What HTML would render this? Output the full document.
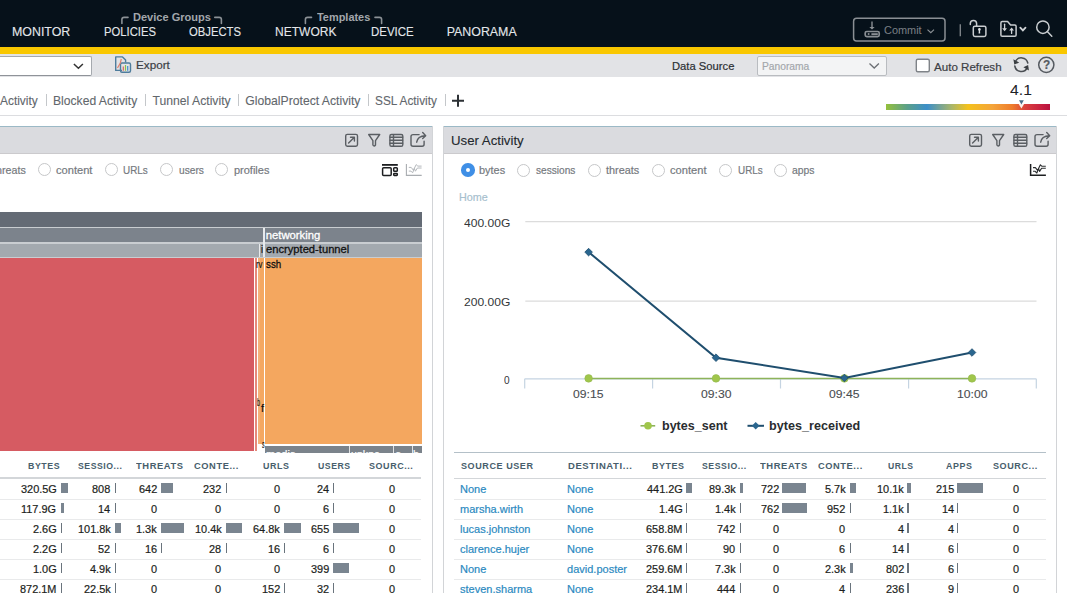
<!DOCTYPE html>
<html><head><meta charset="utf-8"><style>
html,body{margin:0;padding:0;}
body{width:1067px;height:593px;overflow:hidden;position:relative;background:#fff;font-family:"Liberation Sans",sans-serif;}
.t{position:absolute;white-space:nowrap;transform-origin:0 0;-webkit-text-stroke:0.2px currentColor;}
.r{position:absolute;}
</style></head><body>
<div class="r" style="left:0.00px;top:0.00px;width:1067.00px;height:47.00px;background:#06111a;"></div>
<span class="t" style="left:12.00px;top:26.00px;font-size:12.40px;line-height:12.40px;color:#e4e7ea;font-weight:400;-webkit-text-stroke:0.1px currentColor;">MONITOR</span>
<span class="t" style="left:103.70px;top:26.00px;font-size:12.40px;line-height:12.40px;color:#e4e7ea;font-weight:400;transform:scaleX(0.9092);-webkit-text-stroke:0.1px currentColor;">POLICIES</span>
<span class="t" style="left:189.20px;top:26.00px;font-size:12.40px;line-height:12.40px;color:#e4e7ea;font-weight:400;transform:scaleX(0.9092);-webkit-text-stroke:0.1px currentColor;">OBJECTS</span>
<span class="t" style="left:274.70px;top:26.00px;font-size:12.40px;line-height:12.40px;color:#e4e7ea;font-weight:400;transform:scaleX(0.9706);-webkit-text-stroke:0.1px currentColor;">NETWORK</span>
<span class="t" style="left:370.70px;top:26.00px;font-size:12.40px;line-height:12.40px;color:#e4e7ea;font-weight:400;transform:scaleX(0.9251);-webkit-text-stroke:0.1px currentColor;">DEVICE</span>
<span class="t" style="left:446.70px;top:26.00px;font-size:12.40px;line-height:12.40px;color:#e4e7ea;font-weight:400;-webkit-text-stroke:0.1px currentColor;">PANORAMA</span>
<span class="t" style="left:132.80px;top:12.00px;font-size:11.30px;line-height:11.30px;color:#a2a7ac;font-weight:700;transform:scaleX(0.9768);-webkit-text-stroke:0;">Device Groups</span>
<span class="t" style="left:316.70px;top:12.00px;font-size:11.30px;line-height:11.30px;color:#a2a7ac;font-weight:700;transform:scaleX(0.9680);-webkit-text-stroke:0;">Templates</span>
<svg class="r" style="left:0;top:0" width="600" height="46" viewBox="0 0 600 46">
<g fill="none" stroke="#8b9196" stroke-width="1.6" stroke-linecap="round">
<path d="M121.9 23.5 V19.6 Q121.9 17.4 124.1 17.4 H128"/>
<path d="M214.8 17.4 H219.2 Q221.4 17.4 221.4 19.6 V23.5"/>
<path d="M305.4 23.5 V19.6 Q305.4 17.4 307.6 17.4 H311.5"/>
<path d="M375 17.4 H379.4 Q381.6 17.4 381.6 19.6 V23.5"/>
</g></svg>
<svg class="r" style="left:840px;top:0" width="227" height="46" viewBox="840 0 227 46">
<rect x="853.6" y="18.3" width="91.4" height="22.6" rx="3" fill="none" stroke="#8a8f94" stroke-width="1.5"/>
<path d="M872 21.6 V27.6" stroke="#8a8f94" stroke-width="1.4"/>
<path d="M869.3 27 H874.7 L872 29.6 Z" fill="#8a8f94"/>
<rect x="865.2" y="31.5" width="14" height="5.2" rx="1.6" fill="none" stroke="#8a8f94" stroke-width="1.7"/>
<circle cx="868.6" cy="34.1" r="1" fill="#8a8f94"/>
<rect x="871.4" y="33.2" width="6.4" height="1.9" fill="#8a8f94"/>
<path d="M927.5 29.6 L930.8 32.6 L934 29.6" fill="none" stroke="#8a8f94" stroke-width="1.2"/>
<path d="M960.3 24.3 V36.2" stroke="#7d8287" stroke-width="1.4"/>
<g fill="none" stroke="#c9cdd0" stroke-width="1.5">
<path d="M970.3 24.4 V23.6 A3.15 3.15 0 0 1 976.6 23.6 V25.9" stroke-linecap="round"/>
<rect x="973.3" y="26.2" width="12.6" height="10.2" rx="1.6"/>
<path d="M1000.9 35 V22.9 Q1000.9 21.6 1002.2 21.6 H1007.6 L1010.6 24.9 H1014.8 Q1016.1 24.9 1016.1 26.2 V35 Q1016.1 36.3 1014.8 36.3 H1002.2 Q1000.9 36.3 1000.9 35 Z" stroke-linejoin="round"/>
<circle cx="1042.9" cy="27.2" r="6.2"/>
<path d="M1047.3 31.6 L1051.8 36.2" stroke-linecap="round"/>
</g>
<circle cx="979.4" cy="29.4" r="1.3" fill="#dfe2e4"/><path d="M978.8 29.8 H980 L980.2 33.4 H978.6 Z" fill="#dfe2e4"/>
<g fill="none" stroke="#d0d3d6" stroke-width="1.3" stroke-linecap="round">
<path d="M1004.6 24.2 V29.4"/>
<path d="M1011.6 33.4 V29.2"/>
<path d="M1020.3 27.6 L1022.9 30.4 L1025.5 27.6" stroke-width="1.8"/>
</g>
<path d="M1002.2 28.2 L1004.6 31.2 L1007 28.2 Z" fill="#d0d3d6"/>
<path d="M1009.2 30.4 L1011.6 27.4 L1014 30.4 Z" fill="#d0d3d6"/>
</svg>
<span class="t" style="left:884.40px;top:25.00px;font-size:10.80px;line-height:10.80px;color:#7a7f84;font-weight:400;transform:scaleX(1.0106);-webkit-text-stroke:0.05px currentColor;">Commit</span>
<div class="r" style="left:0.00px;top:47.00px;width:1067.00px;height:7.00px;background:#f9c700;"></div>
<div class="r" style="left:0.00px;top:54.00px;width:1067.00px;height:23.00px;background:#e2e3e6;"></div>
<div class="r" style="left:-10px;top:55.5px;width:99.5px;height:18.5px;background:#fff;border:1px solid #a5a9ae;border-bottom-color:#8f9399;border-radius:2px;"></div>
<svg class="r" style="left:0;top:50px" width="1067" height="30" viewBox="0 50 1067 30">
<path d="M73.9 64 L78.4 68.3 L82.9 64" fill="none" stroke="#333" stroke-width="1.5"/>
<g fill="none" stroke="#4e7c9c" stroke-width="1.4" stroke-linejoin="round">
<path d="M122 70.4 H115.7 V56.9 H122.5 L125.6 60 V62.6"/>
<rect x="120.5" y="63" width="10" height="9.3" rx="1.5"/>
</g>
<path d="M117.5 68 L120.3 63 L121.3 59" stroke="#e0826f" stroke-width="1.2" fill="none"/>
<path d="M123.3 70.8 V66.5" stroke="#d9655c" stroke-width="1.2"/>
<path d="M125.5 70.8 V65" stroke="#8cbf4c" stroke-width="1.2"/>
<path d="M127.7 70.8 V66" stroke="#3f8dcc" stroke-width="1.2"/>
<rect x="916.3" y="59.3" width="13" height="12.5" rx="1.5" fill="#fff" stroke="#7f8388" stroke-width="1.4"/>
<g fill="none" stroke="#4a4e53" stroke-width="1.5" stroke-linecap="round">
<path d="M1027.8 63 A6.6 6.6 0 0 0 1015.4 61.6"/>
<path d="M1014.8 66 A6.6 6.6 0 0 0 1027.4 67.4"/>
</g>
<path d="M1013.4 59.2 L1014.3 64.6 L1019.2 62.6 Z" fill="#3a3e42"/>
<path d="M1028.9 70.4 L1028.1 65 L1023.4 67.2 Z" fill="#3a3e42"/>
<circle cx="1046.3" cy="64.8" r="7.6" fill="none" stroke="#555a60" stroke-width="1.5"/>
</svg>
<span class="t" style="left:1042.60px;top:59.00px;font-size:12.00px;line-height:12.00px;color:#555a60;font-weight:700;transform:scaleX(0.9836);">?</span>
<span class="t" style="left:135.70px;top:60.00px;font-size:11.80px;line-height:11.80px;color:#3c4045;font-weight:400;transform:scaleX(0.9911);">Export</span>
<span class="t" style="left:671.70px;top:61.00px;font-size:11.80px;line-height:11.80px;color:#2b2f33;font-weight:400;transform:scaleX(0.9526);">Data Source</span>
<div class="r" style="left:756.5px;top:56px;width:128px;height:17.5px;background:#f3f4f5;border:1px solid #b9bcc0;border-radius:2px;"></div>
<svg class="r" style="left:860px;top:56px" width="25" height="18" viewBox="860 56 25 18"><path d="M869.5 63.5 L874.2 68 L878.9 63.5" fill="none" stroke="#6b6f74" stroke-width="1.3"/></svg>
<span class="t" style="left:761.70px;top:61.00px;font-size:11.50px;line-height:11.50px;color:#a3a7ab;font-weight:400;transform:scaleX(0.8912);">Panorama</span>
<span class="t" style="left:934.10px;top:62.00px;font-size:11.80px;line-height:11.80px;color:#3c4045;font-weight:400;transform:scaleX(0.9814);">Auto Refresh</span>
<div class="r" style="left:0.00px;top:115.00px;width:1067.00px;height:1.00px;background:#dcdde0;"></div>
<span class="t" style="left:0.00px;top:95.00px;font-size:12.20px;line-height:12.20px;color:#62676c;font-weight:400;transform:scaleX(0.9782);-webkit-text-stroke:0.1px currentColor;">Activity</span>
<span class="t" style="left:52.90px;top:95.00px;font-size:12.20px;line-height:12.20px;color:#62676c;font-weight:400;transform:scaleX(0.9946);-webkit-text-stroke:0.1px currentColor;">Blocked Activity</span>
<span class="t" style="left:152.50px;top:95.00px;font-size:12.20px;line-height:12.20px;color:#62676c;font-weight:400;-webkit-text-stroke:0.1px currentColor;">Tunnel Activity</span>
<span class="t" style="left:245.30px;top:95.00px;font-size:12.20px;line-height:12.20px;color:#62676c;font-weight:400;-webkit-text-stroke:0.1px currentColor;">GlobalProtect Activity</span>
<span class="t" style="left:375.00px;top:95.00px;font-size:12.20px;line-height:12.20px;color:#62676c;font-weight:400;transform:scaleX(0.9694);-webkit-text-stroke:0.1px currentColor;">SSL Activity</span>
<div class="r" style="left:45.60px;top:94.40px;width:1.00px;height:12.00px;background:#c4c7ca;"></div>
<div class="r" style="left:145.20px;top:94.40px;width:1.00px;height:12.00px;background:#c4c7ca;"></div>
<div class="r" style="left:237.80px;top:94.40px;width:1.00px;height:12.00px;background:#c4c7ca;"></div>
<div class="r" style="left:367.80px;top:94.40px;width:1.00px;height:12.00px;background:#c4c7ca;"></div>
<div class="r" style="left:445.00px;top:94.40px;width:1.00px;height:12.00px;background:#c4c7ca;"></div>
<svg class="r" style="left:440px;top:90px" width="30" height="22" viewBox="440 90 30 22">
<path d="M452 100.7 H464 M458 94.7 V106.7" stroke="#2d3135" stroke-width="2"/></svg>
<span class="t" style="left:1010.30px;top:83.00px;font-size:14.80px;line-height:14.80px;color:#1e2226;font-weight:400;transform:scaleX(1.0646);-webkit-text-stroke:0;">4.1</span>
<div class="r" style="left:885.7px;top:104.3px;width:164.5px;height:5.4px;background:linear-gradient(90deg,#95c03c 0%,#5aa08a 13%,#3c8fc9 25%,#a9b66a 40%,#f4c21c 50%,#f4a43a 65%,#ee7c2c 77%,#d9413e 85%,#c71f41 95%,#b8123f 100%);"></div>
<svg class="r" style="left:1010px;top:96px" width="24" height="16" viewBox="1010 96 24 16">
<path d="M1018.4 103.6 H1024.4 L1021.4 108.4 Z" fill="#fff" opacity="0.9"/>
<path d="M1019 100.2 H1023.8 L1021.4 104.6 Z" fill="#4a6f8a"/></svg>
<div class="r" style="left:-2.00px;top:126.00px;width:434.00px;height:27.70px;background:#dadbdf;border-top:1px solid #9bb9c6;border-bottom:1px solid #cbcacd;box-sizing:border-box;"></div>
<div class="r" style="left:432.00px;top:126.00px;width:1.00px;height:467.00px;background:#d2d4d7;"></div>
<svg class="r" style="left:339.50px;top:128px" width="95" height="22" viewBox="339.50 128 95 22">
<g transform="translate(-624.40,0)" fill="none" stroke="#5a5e63" stroke-width="1.4" stroke-linecap="round" stroke-linejoin="round">
<rect x="969.6" y="134.4" width="11.8" height="11.8" rx="1.6"/>
<path d="M972.5 143 L978.3 137.2 M974.4 137.2 H978.3 V141.1"/>
<path d="M992.6 134.5 H1003.6 L999.4 140.6 V145 Q998 147 996.8 145 V140.6 Z"/>
<rect x="1013.8" y="134.5" width="12.9" height="11.8" rx="1.6"/>
<path d="M1017.4 134.7 V146 M1014 137.3 H1026.5 M1014 140.3 H1026.5 M1014 143.3 H1026.5"/>
<path d="M1043 134.6 H1037 Q1034.9 134.6 1034.9 136.6 V144.2 Q1034.9 146.2 1037 146.2 H1046 Q1048 146.2 1048 144.2 V141.2"/>
<path d="M1040.6 142.2 Q1041.4 136 1049.4 135.7 M1046.6 132.6 L1049.6 135.7 L1046.6 138.6"/>
</g></svg>
<span class="t" style="left:-4.23px;top:165.00px;font-size:11.50px;line-height:11.50px;color:#75797e;font-weight:400;transform:scaleX(0.9300);">hreats</span>
<div class="r" style="left:37.60px;top:163.40px;width:11px;height:11px;border-radius:50%;border:1.5px solid #c6c7c9;background:#fff;"></div>
<span class="t" style="left:56.00px;top:165.00px;font-size:11.50px;line-height:11.50px;color:#75797e;font-weight:400;transform:scaleX(0.9650);">content</span>
<div class="r" style="left:104.60px;top:163.40px;width:11px;height:11px;border-radius:50%;border:1.5px solid #c6c7c9;background:#fff;"></div>
<span class="t" style="left:123.30px;top:165.00px;font-size:11.50px;line-height:11.50px;color:#75797e;font-weight:400;transform:scaleX(0.8591);">URLs</span>
<div class="r" style="left:159.90px;top:163.40px;width:11px;height:11px;border-radius:50%;border:1.5px solid #c6c7c9;background:#fff;"></div>
<span class="t" style="left:178.50px;top:165.00px;font-size:11.50px;line-height:11.50px;color:#75797e;font-weight:400;transform:scaleX(0.8856);">users</span>
<div class="r" style="left:215.00px;top:163.40px;width:11px;height:11px;border-radius:50%;border:1.5px solid #c6c7c9;background:#fff;"></div>
<span class="t" style="left:233.60px;top:165.00px;font-size:11.50px;line-height:11.50px;color:#75797e;font-weight:400;transform:scaleX(0.9545);">profiles</span>
<svg class="r" style="left:378px;top:158px" width="48" height="24" viewBox="378 158 48 24">
<g fill="none" stroke="#1d1f21" stroke-width="1.5">
<path d="M382 164.9 H397.8" stroke-width="1.8"/>
<rect x="382.6" y="167.8" width="8.6" height="7.6" rx="1"/>
<rect x="393.7" y="167.8" width="3.6" height="3.4" rx="0.8"/>
<rect x="393.7" y="173.6" width="3.6" height="1.8" rx="0.6"/>
</g>
<path d="M406.4 163.9 V175.4 H421.7" fill="none" stroke="#a9adb1" stroke-width="1.1"/>
<g fill="none" stroke="#b4b8bc" stroke-width="1" stroke-linejoin="round">
<path d="M408.8 167.4 H411.2 L413.4 170.2 L416.2 164.6 L417.8 166.1 H421.6"/>
<path d="M408.8 171.1 H411 L412.6 172.8 L414.4 168.4 L415.4 171.2 L417.4 168 H421.6"/>
</g></svg>
<div class="r" style="left:-2.00px;top:226.70px;width:424.00px;height:31.30px;background:#c9cdd1;"></div>
<div class="r" style="left:-2.00px;top:212.30px;width:424.00px;height:14.40px;background:#646b75;"></div>
<div class="r" style="left:-2.00px;top:228.30px;width:424.00px;height:13.50px;background:#7c838c;"></div>
<div class="r" style="left:-2.00px;top:243.50px;width:424.00px;height:13.20px;background:#a3a9af;"></div>
<div class="r" style="left:263.30px;top:228.30px;width:1.50px;height:28.40px;background:#e8eaec;"></div>
<div class="r" style="left:258.80px;top:243.50px;width:1.20px;height:13.20px;background:#e8eaec;"></div>
<div class="r" style="left:-2.00px;top:258.00px;width:256.30px;height:193.00px;background:#d65b62;"></div>
<div class="r" style="left:255.40px;top:258.00px;width:1.60px;height:193.00px;background:#e58a7c;"></div>
<div class="r" style="left:257.60px;top:258.00px;width:2.00px;height:185.70px;background:#f2b27a;"></div>
<div class="r" style="left:260.30px;top:258.00px;width:3.40px;height:185.70px;background:#f4a862;"></div>
<div class="r" style="left:264.60px;top:258.00px;width:157.20px;height:185.70px;background:#f4a75f;"></div>
<div class="r" style="left:264.60px;top:445.50px;width:157.00px;height:7.20px;background:#7b838b;"></div>
<div class="r" style="left:348.70px;top:445.50px;width:1.00px;height:7.20px;background:#e0e2e4;"></div>
<div class="r" style="left:392.80px;top:445.50px;width:1.00px;height:7.20px;background:#e0e2e4;"></div>
<div class="r" style="left:411.50px;top:445.50px;width:1.00px;height:7.20px;background:#e0e2e4;"></div>
<div class="r" style="left:264.6px;top:445.5px;width:157px;height:7.2px;overflow:hidden;"><span class="t" style="left:1.80px;top:3.00px;font-size:11.30px;line-height:11.30px;color:#ffffff;font-weight:400;transform:scaleX(0.9743);">media</span><span class="t" style="left:86.00px;top:3.00px;font-size:11.30px;line-height:11.30px;color:#ffffff;font-weight:400;transform:scaleX(0.9418);">unkno</span><span class="t" style="left:130.00px;top:3.00px;font-size:11.30px;line-height:11.30px;color:#ffffff;font-weight:400;transform:scaleX(1.0619);">c</span><span class="t" style="left:148.60px;top:3.00px;font-size:11.30px;line-height:11.30px;color:#ffffff;font-weight:400;transform:scaleX(0.9567);">b</span></div>
<span class="t" style="left:261.50px;top:439.00px;font-size:11.30px;line-height:11.30px;color:#111;font-weight:400;transform:scaleX(0.4425);">s</span>
<span class="t" style="left:265.70px;top:230.00px;font-size:11.30px;line-height:11.30px;color:#fff;font-weight:400;-webkit-text-stroke:0.3px currentColor;">networking</span>
<span class="t" style="left:260.80px;top:244.00px;font-size:11.30px;line-height:11.30px;color:#111;font-weight:400;transform:scaleX(0.7955);">i</span>
<span class="t" style="left:265.70px;top:244.00px;font-size:11.30px;line-height:11.30px;color:#111;font-weight:400;transform:scaleX(0.9895);-webkit-text-stroke:0.3px currentColor;">encrypted-tunnel</span>
<span class="t" style="left:256.20px;top:259.00px;font-size:11.30px;line-height:11.30px;color:#111;font-weight:400;transform:scaleX(0.6910);">rv</span>
<span class="t" style="left:265.70px;top:259.00px;font-size:11.30px;line-height:11.30px;color:#111;font-weight:400;transform:scaleX(0.8650);-webkit-text-stroke:0.3px currentColor;">ssh</span>
<span class="t" style="left:256.80px;top:397.00px;font-size:11.30px;line-height:11.30px;color:#111;font-weight:400;transform:scaleX(0.4784);">b</span>
<span class="t" style="left:261.00px;top:403.00px;font-size:11.30px;line-height:11.30px;color:#111;font-weight:400;transform:scaleX(0.9482);">f</span>
<span class="t" style="left:27.80px;top:461.00px;font-size:9.70px;line-height:9.70px;color:#475e6c;font-weight:700;transform:scaleX(0.9094);letter-spacing:0.6px;-webkit-text-stroke:0;">BYTES</span>
<span class="t" style="left:78.00px;top:461.00px;font-size:9.70px;line-height:9.70px;color:#475e6c;font-weight:700;transform:scaleX(0.8978);letter-spacing:0.6px;-webkit-text-stroke:0;">SESSIO...</span>
<span class="t" style="left:136.00px;top:461.00px;font-size:9.70px;line-height:9.70px;color:#475e6c;font-weight:700;transform:scaleX(0.9655);letter-spacing:0.6px;-webkit-text-stroke:0;">THREATS</span>
<span class="t" style="left:194.10px;top:461.00px;font-size:9.70px;line-height:9.70px;color:#475e6c;font-weight:700;transform:scaleX(0.9605);letter-spacing:0.6px;-webkit-text-stroke:0;">CONTE...</span>
<span class="t" style="left:263.30px;top:461.00px;font-size:9.70px;line-height:9.70px;color:#475e6c;font-weight:700;transform:scaleX(0.9182);letter-spacing:0.6px;-webkit-text-stroke:0;">URLS</span>
<span class="t" style="left:318.40px;top:461.00px;font-size:9.70px;line-height:9.70px;color:#475e6c;font-weight:700;transform:scaleX(0.8990);letter-spacing:0.6px;-webkit-text-stroke:0;">USERS</span>
<span class="t" style="left:368.80px;top:461.00px;font-size:9.70px;line-height:9.70px;color:#475e6c;font-weight:700;transform:scaleX(0.9278);letter-spacing:0.6px;-webkit-text-stroke:0;">SOURC...</span>
<div class="r" style="left:-2.00px;top:477.30px;width:423.20px;height:1.60px;background:#d3d6d9;"></div>
<span class="t" style="left:20.64px;top:484.00px;font-size:11.10px;line-height:11.10px;color:#1c1e20;font-weight:400;transform:scaleX(0.9850);">320.5G</span>
<div class="r" style="left:61.00px;top:483.30px;width:6.80px;height:10.00px;background:#7a8590;"></div>
<span class="t" style="left:92.27px;top:484.00px;font-size:11.10px;line-height:11.10px;color:#1c1e20;font-weight:400;transform:scaleX(0.9850);">808</span>
<div class="r" style="left:114.90px;top:483.40px;width:1.30px;height:9.90px;background:#6a747d;"></div>
<span class="t" style="left:138.77px;top:484.00px;font-size:11.10px;line-height:11.10px;color:#1c1e20;font-weight:400;transform:scaleX(0.9850);">642</span>
<div class="r" style="left:161.20px;top:483.30px;width:12.00px;height:10.00px;background:#7a8590;"></div>
<span class="t" style="left:203.27px;top:484.00px;font-size:11.10px;line-height:11.10px;color:#1c1e20;font-weight:400;transform:scaleX(0.9850);">232</span>
<div class="r" style="left:225.60px;top:483.40px;width:1.30px;height:9.90px;background:#6a747d;"></div>
<span class="t" style="left:273.93px;top:484.00px;font-size:11.10px;line-height:11.10px;color:#1c1e20;font-weight:400;transform:scaleX(0.9850);">0</span>
<span class="t" style="left:316.84px;top:484.00px;font-size:11.10px;line-height:11.10px;color:#1c1e20;font-weight:400;transform:scaleX(0.9850);">24</span>
<div class="r" style="left:333.00px;top:483.40px;width:1.30px;height:9.90px;background:#6a747d;"></div>
<span class="t" style="left:388.93px;top:484.00px;font-size:11.10px;line-height:11.10px;color:#1c1e20;font-weight:400;transform:scaleX(0.9850);">0</span>
<span class="t" style="left:21.46px;top:504.00px;font-size:11.10px;line-height:11.10px;color:#1c1e20;font-weight:400;transform:scaleX(0.9850);">117.9G</span>
<div class="r" style="left:61.00px;top:503.30px;width:2.70px;height:10.00px;background:#7a8590;"></div>
<span class="t" style="left:98.34px;top:504.00px;font-size:11.10px;line-height:11.10px;color:#1c1e20;font-weight:400;transform:scaleX(0.9850);">14</span>
<div class="r" style="left:114.90px;top:503.40px;width:1.30px;height:9.90px;background:#6a747d;"></div>
<span class="t" style="left:150.93px;top:504.00px;font-size:11.10px;line-height:11.10px;color:#1c1e20;font-weight:400;transform:scaleX(0.9850);">0</span>
<span class="t" style="left:215.43px;top:504.00px;font-size:11.10px;line-height:11.10px;color:#1c1e20;font-weight:400;transform:scaleX(0.9850);">0</span>
<span class="t" style="left:273.93px;top:504.00px;font-size:11.10px;line-height:11.10px;color:#1c1e20;font-weight:400;transform:scaleX(0.9850);">0</span>
<span class="t" style="left:322.93px;top:504.00px;font-size:11.10px;line-height:11.10px;color:#1c1e20;font-weight:400;transform:scaleX(0.9850);">6</span>
<div class="r" style="left:333.00px;top:503.40px;width:1.30px;height:9.90px;background:#6a747d;"></div>
<span class="t" style="left:388.93px;top:504.00px;font-size:11.10px;line-height:11.10px;color:#1c1e20;font-weight:400;transform:scaleX(0.9850);">0</span>
<span class="t" style="left:32.80px;top:524.00px;font-size:11.10px;line-height:11.10px;color:#1c1e20;font-weight:400;transform:scaleX(0.9850);">2.6G</span>
<div class="r" style="left:61.00px;top:523.40px;width:1.30px;height:9.90px;background:#6a747d;"></div>
<span class="t" style="left:77.64px;top:524.00px;font-size:11.10px;line-height:11.10px;color:#1c1e20;font-weight:400;transform:scaleX(0.9850);">101.8k</span>
<div class="r" style="left:114.90px;top:523.30px;width:6.00px;height:10.00px;background:#7a8590;"></div>
<span class="t" style="left:136.31px;top:524.00px;font-size:11.10px;line-height:11.10px;color:#1c1e20;font-weight:400;transform:scaleX(0.9850);">1.3k</span>
<div class="r" style="left:161.20px;top:523.30px;width:23.00px;height:10.00px;background:#7a8590;"></div>
<span class="t" style="left:194.71px;top:524.00px;font-size:11.10px;line-height:11.10px;color:#1c1e20;font-weight:400;transform:scaleX(0.9850);">10.4k</span>
<div class="r" style="left:225.60px;top:523.30px;width:16.50px;height:10.00px;background:#7a8590;"></div>
<span class="t" style="left:253.21px;top:524.00px;font-size:11.10px;line-height:11.10px;color:#1c1e20;font-weight:400;transform:scaleX(0.9850);">64.8k</span>
<div class="r" style="left:283.60px;top:523.30px;width:17.00px;height:10.00px;background:#7a8590;"></div>
<span class="t" style="left:310.77px;top:524.00px;font-size:11.10px;line-height:11.10px;color:#1c1e20;font-weight:400;transform:scaleX(0.9850);">655</span>
<div class="r" style="left:333.00px;top:523.30px;width:25.60px;height:10.00px;background:#7a8590;"></div>
<span class="t" style="left:388.93px;top:524.00px;font-size:11.10px;line-height:11.10px;color:#1c1e20;font-weight:400;transform:scaleX(0.9850);">0</span>
<span class="t" style="left:32.80px;top:544.00px;font-size:11.10px;line-height:11.10px;color:#1c1e20;font-weight:400;transform:scaleX(0.9850);">2.2G</span>
<div class="r" style="left:61.00px;top:543.40px;width:1.30px;height:9.90px;background:#6a747d;"></div>
<span class="t" style="left:98.34px;top:544.00px;font-size:11.10px;line-height:11.10px;color:#1c1e20;font-weight:400;transform:scaleX(0.9850);">52</span>
<div class="r" style="left:114.90px;top:543.40px;width:1.30px;height:9.90px;background:#6a747d;"></div>
<span class="t" style="left:144.84px;top:544.00px;font-size:11.10px;line-height:11.10px;color:#1c1e20;font-weight:400;transform:scaleX(0.9850);">16</span>
<div class="r" style="left:161.20px;top:543.40px;width:1.30px;height:9.90px;background:#6a747d;"></div>
<span class="t" style="left:209.34px;top:544.00px;font-size:11.10px;line-height:11.10px;color:#1c1e20;font-weight:400;transform:scaleX(0.9850);">28</span>
<div class="r" style="left:225.60px;top:543.40px;width:1.30px;height:9.90px;background:#6a747d;"></div>
<span class="t" style="left:267.84px;top:544.00px;font-size:11.10px;line-height:11.10px;color:#1c1e20;font-weight:400;transform:scaleX(0.9850);">16</span>
<div class="r" style="left:283.60px;top:543.40px;width:1.30px;height:9.90px;background:#6a747d;"></div>
<span class="t" style="left:322.93px;top:544.00px;font-size:11.10px;line-height:11.10px;color:#1c1e20;font-weight:400;transform:scaleX(0.9850);">6</span>
<div class="r" style="left:333.00px;top:543.40px;width:1.30px;height:9.90px;background:#6a747d;"></div>
<span class="t" style="left:388.93px;top:544.00px;font-size:11.10px;line-height:11.10px;color:#1c1e20;font-weight:400;transform:scaleX(0.9850);">0</span>
<span class="t" style="left:32.80px;top:564.00px;font-size:11.10px;line-height:11.10px;color:#1c1e20;font-weight:400;transform:scaleX(0.9850);">1.0G</span>
<div class="r" style="left:61.00px;top:563.40px;width:1.30px;height:9.90px;background:#6a747d;"></div>
<span class="t" style="left:89.81px;top:564.00px;font-size:11.10px;line-height:11.10px;color:#1c1e20;font-weight:400;transform:scaleX(0.9850);">4.9k</span>
<div class="r" style="left:114.90px;top:563.40px;width:1.30px;height:9.90px;background:#6a747d;"></div>
<span class="t" style="left:150.93px;top:564.00px;font-size:11.10px;line-height:11.10px;color:#1c1e20;font-weight:400;transform:scaleX(0.9850);">0</span>
<span class="t" style="left:215.43px;top:564.00px;font-size:11.10px;line-height:11.10px;color:#1c1e20;font-weight:400;transform:scaleX(0.9850);">0</span>
<span class="t" style="left:273.93px;top:564.00px;font-size:11.10px;line-height:11.10px;color:#1c1e20;font-weight:400;transform:scaleX(0.9850);">0</span>
<span class="t" style="left:310.77px;top:564.00px;font-size:11.10px;line-height:11.10px;color:#1c1e20;font-weight:400;transform:scaleX(0.9850);">399</span>
<div class="r" style="left:333.00px;top:563.30px;width:15.60px;height:10.00px;background:#7a8590;"></div>
<span class="t" style="left:388.93px;top:564.00px;font-size:11.10px;line-height:11.10px;color:#1c1e20;font-weight:400;transform:scaleX(0.9850);">0</span>
<span class="t" style="left:20.04px;top:584.00px;font-size:11.10px;line-height:11.10px;color:#1c1e20;font-weight:400;transform:scaleX(0.9850);">872.1M</span>
<div class="r" style="left:61.00px;top:583.40px;width:1.30px;height:9.90px;background:#6a747d;"></div>
<span class="t" style="left:83.71px;top:584.00px;font-size:11.10px;line-height:11.10px;color:#1c1e20;font-weight:400;transform:scaleX(0.9850);">22.5k</span>
<div class="r" style="left:114.90px;top:583.40px;width:1.30px;height:9.90px;background:#6a747d;"></div>
<span class="t" style="left:150.93px;top:584.00px;font-size:11.10px;line-height:11.10px;color:#1c1e20;font-weight:400;transform:scaleX(0.9850);">0</span>
<span class="t" style="left:215.43px;top:584.00px;font-size:11.10px;line-height:11.10px;color:#1c1e20;font-weight:400;transform:scaleX(0.9850);">0</span>
<span class="t" style="left:261.77px;top:584.00px;font-size:11.10px;line-height:11.10px;color:#1c1e20;font-weight:400;transform:scaleX(0.9850);">152</span>
<div class="r" style="left:283.60px;top:583.40px;width:1.30px;height:9.90px;background:#6a747d;"></div>
<span class="t" style="left:316.84px;top:584.00px;font-size:11.10px;line-height:11.10px;color:#1c1e20;font-weight:400;transform:scaleX(0.9850);">32</span>
<div class="r" style="left:333.00px;top:583.40px;width:1.30px;height:9.90px;background:#6a747d;"></div>
<span class="t" style="left:388.93px;top:584.00px;font-size:11.10px;line-height:11.10px;color:#1c1e20;font-weight:400;transform:scaleX(0.9850);">0</span>
<div class="r" style="left:-2.00px;top:498.50px;width:423.20px;height:1.00px;background:#e9eaeb;"></div>
<div class="r" style="left:-2.00px;top:518.50px;width:423.20px;height:1.00px;background:#e9eaeb;"></div>
<div class="r" style="left:-2.00px;top:538.50px;width:423.20px;height:1.00px;background:#e9eaeb;"></div>
<div class="r" style="left:-2.00px;top:558.50px;width:423.20px;height:1.00px;background:#e9eaeb;"></div>
<div class="r" style="left:-2.00px;top:578.50px;width:423.20px;height:1.00px;background:#e9eaeb;"></div>
<div class="r" style="left:-2.00px;top:598.50px;width:423.20px;height:1.00px;background:#e9eaeb;"></div>
<div class="r" style="left:443.20px;top:126.00px;width:1.00px;height:467.00px;background:#d2d4d7;"></div>
<div class="r" style="left:1056.00px;top:126.00px;width:1.00px;height:467.00px;background:#d2d4d7;"></div>
<div class="r" style="left:444.20px;top:126.00px;width:611.80px;height:27.70px;background:#dadbdf;border-top:1px solid #9bb9c6;border-bottom:1px solid #cbcacd;box-sizing:border-box;"></div>
<span class="t" style="left:450.50px;top:134.00px;font-size:13.30px;line-height:13.30px;color:#22282d;font-weight:400;transform:scaleX(0.9938);-webkit-text-stroke:0.1px currentColor;">User Activity</span>
<svg class="r" style="left:963.90px;top:128px" width="95" height="22" viewBox="963.90 128 95 22">
<g transform="translate(0.00,0)" fill="none" stroke="#5a5e63" stroke-width="1.4" stroke-linecap="round" stroke-linejoin="round">
<rect x="969.6" y="134.4" width="11.8" height="11.8" rx="1.6"/>
<path d="M972.5 143 L978.3 137.2 M974.4 137.2 H978.3 V141.1"/>
<path d="M992.6 134.5 H1003.6 L999.4 140.6 V145 Q998 147 996.8 145 V140.6 Z"/>
<rect x="1013.8" y="134.5" width="12.9" height="11.8" rx="1.6"/>
<path d="M1017.4 134.7 V146 M1014 137.3 H1026.5 M1014 140.3 H1026.5 M1014 143.3 H1026.5"/>
<path d="M1043 134.6 H1037 Q1034.9 134.6 1034.9 136.6 V144.2 Q1034.9 146.2 1037 146.2 H1046 Q1048 146.2 1048 144.2 V141.2"/>
<path d="M1040.6 142.2 Q1041.4 136 1049.4 135.7 M1046.6 132.6 L1049.6 135.7 L1046.6 138.6"/>
</g></svg>
<div class="r" style="left:461.30px;top:163.10px;width:13.6px;height:13.6px;border-radius:50%;background:#3f8fe6;"></div><div class="r" style="left:466.00px;top:167.80px;width:4.2px;height:4.2px;border-radius:50%;background:#fff;"></div>
<div class="r" style="left:517.20px;top:163.90px;width:11px;height:11px;border-radius:50%;border:1.5px solid #c6c7c9;background:#fff;"></div>
<span class="t" style="left:536.00px;top:165.00px;font-size:11.50px;line-height:11.50px;color:#75797e;font-weight:400;transform:scaleX(0.8785);">sessions</span>
<div class="r" style="left:587.50px;top:163.90px;width:11px;height:11px;border-radius:50%;border:1.5px solid #c6c7c9;background:#fff;"></div>
<span class="t" style="left:605.80px;top:165.00px;font-size:11.50px;line-height:11.50px;color:#75797e;font-weight:400;transform:scaleX(0.9442);">threats</span>
<div class="r" style="left:651.50px;top:163.90px;width:11px;height:11px;border-radius:50%;border:1.5px solid #c6c7c9;background:#fff;"></div>
<span class="t" style="left:670.00px;top:165.00px;font-size:11.50px;line-height:11.50px;color:#75797e;font-weight:400;transform:scaleX(0.9677);">content</span>
<div class="r" style="left:719.00px;top:163.90px;width:11px;height:11px;border-radius:50%;border:1.5px solid #c6c7c9;background:#fff;"></div>
<span class="t" style="left:737.50px;top:165.00px;font-size:11.50px;line-height:11.50px;color:#75797e;font-weight:400;transform:scaleX(0.8591);">URLs</span>
<div class="r" style="left:774.30px;top:163.90px;width:11px;height:11px;border-radius:50%;border:1.5px solid #c6c7c9;background:#fff;"></div>
<span class="t" style="left:792.20px;top:165.00px;font-size:11.50px;line-height:11.50px;color:#75797e;font-weight:400;transform:scaleX(0.9027);">apps</span>
<span class="t" style="left:479.30px;top:165.00px;font-size:11.50px;line-height:11.50px;color:#75797e;font-weight:400;transform:scaleX(0.9496);">bytes</span>
<svg class="r" style="left:1026px;top:160px" width="24" height="20" viewBox="1026 160 24 20">
<path d="M1030.6 164.1 V175.2 H1045.9" fill="none" stroke="#1d1f21" stroke-width="1.5"/>
<g fill="none" stroke="#2a2c2e" stroke-width="1.1" stroke-linejoin="round">
<path d="M1033 167.6 H1035.4 L1037.6 170.4 L1040.4 164.8 L1042 166.3 H1045.8"/>
<path d="M1033 171.3 H1035.2 L1036.8 173 L1038.6 168.6 L1039.6 171.4 L1041.6 168.2 H1045.8"/>
</g></svg>
<span class="t" style="left:458.50px;top:192.00px;font-size:11.30px;line-height:11.30px;color:#a7c0ce;font-weight:400;transform:scaleX(0.9521);">Home</span>
<span class="t" style="left:464.00px;top:218.00px;font-size:11.30px;line-height:11.30px;color:#333639;font-weight:400;transform:scaleX(1.0677);-webkit-text-stroke:0;">400.00G</span>
<span class="t" style="left:464.00px;top:297.00px;font-size:11.30px;line-height:11.30px;color:#333639;font-weight:400;transform:scaleX(1.0677);-webkit-text-stroke:0;">200.00G</span>
<span class="t" style="left:504.20px;top:375.00px;font-size:11.30px;line-height:11.30px;color:#333639;font-weight:400;transform:scaleX(0.8929);-webkit-text-stroke:0;">0</span>
<span class="t" style="left:573.35px;top:389.00px;font-size:11.30px;line-height:11.30px;color:#4a4d50;font-weight:400;transform:scaleX(1.0786);-webkit-text-stroke:0.1px currentColor;">09:15</span>
<span class="t" style="left:700.75px;top:389.00px;font-size:11.30px;line-height:11.30px;color:#4a4d50;font-weight:400;transform:scaleX(1.0786);-webkit-text-stroke:0.1px currentColor;">09:30</span>
<span class="t" style="left:829.15px;top:389.00px;font-size:11.30px;line-height:11.30px;color:#4a4d50;font-weight:400;transform:scaleX(1.0786);-webkit-text-stroke:0.1px currentColor;">09:45</span>
<span class="t" style="left:956.75px;top:389.00px;font-size:11.30px;line-height:11.30px;color:#4a4d50;font-weight:400;transform:scaleX(1.0786);-webkit-text-stroke:0.1px currentColor;">10:00</span>
<svg class="r" style="left:450px;top:200px" width="600" height="245" viewBox="450 200 600 245">
<path d="M525.3 221.6 H1036.5 M525.3 301.2 H1036.5" stroke="#dcdcdc" stroke-width="1.2"/>
<path d="M524.7 378.8 H1036.3 M524.7 378.8 V388.5 M652.6 378.8 V388.5 M780.5 378.8 V388.5 M908.6 378.8 V388.5 M1036.3 378.8 V388.5" stroke="#c5d4e2" stroke-width="1.2" fill="none"/>
<path d="M588.6 378.5 H972" stroke="#8db35a" stroke-width="1.5"/>
<g fill="#a0c64b" stroke="#93b950" stroke-width="0.6"><circle cx="588.6" cy="378.4" r="3.8"/><circle cx="716" cy="378.4" r="3.8"/><circle cx="844.4" cy="378.4" r="3.8"/><circle cx="972" cy="378.4" r="3.8"/></g>
<path d="M588.6 252.1 L716 357.7 L844.4 378 L972 352.5" stroke="#1f4e6e" stroke-width="2" fill="none"/>
<g fill="#2a668f" stroke="#1f4e6e" stroke-width="0.8">
<path d="M588.6 248.3 L592.4 252.1 L588.6 255.9 L584.8 252.1 Z"/>
<path d="M716 353.9 L719.8 357.7 L716 361.5 L712.2 357.7 Z"/>
<path d="M844.4 374.2 L848.2 378 L844.4 381.8 L840.6 378 Z"/>
<path d="M972 348.7 L975.8 352.5 L972 356.3 L968.2 352.5 Z"/>
</g>
<path d="M640.5 425.8 H655.2" stroke="#8db35a" stroke-width="1.6"/><circle cx="648" cy="425.8" r="3.8" fill="#a0c64b"/>
<path d="M747.5 425.8 H764" stroke="#1f4e6e" stroke-width="2"/><path d="M755.7 422 L759.5 425.8 L755.7 429.6 L751.9 425.8 Z" fill="#2a668f"/>
</svg>
<span class="t" style="left:661.60px;top:420.00px;font-size:12.60px;line-height:12.60px;color:#2a2d30;font-weight:700;transform:scaleX(0.9949);-webkit-text-stroke:0;">bytes_sent</span>
<span class="t" style="left:769.10px;top:420.00px;font-size:12.60px;line-height:12.60px;color:#2a2d30;font-weight:700;-webkit-text-stroke:0;">bytes_received</span>
<div class="r" style="left:454.40px;top:451.80px;width:592.00px;height:1.40px;background:#b4c0c8;"></div>
<span class="t" style="left:460.70px;top:461.00px;font-size:9.70px;line-height:9.70px;color:#475e6c;font-weight:700;transform:scaleX(0.9345);letter-spacing:0.6px;-webkit-text-stroke:0;">SOURCE USER</span>
<span class="t" style="left:567.70px;top:461.00px;font-size:9.70px;line-height:9.70px;color:#475e6c;font-weight:700;transform:scaleX(0.9806);letter-spacing:0.6px;-webkit-text-stroke:0;">DESTINATI...</span>
<span class="t" style="left:651.90px;top:461.00px;font-size:9.70px;line-height:9.70px;color:#475e6c;font-weight:700;transform:scaleX(0.9209);letter-spacing:0.6px;-webkit-text-stroke:0;">BYTES</span>
<span class="t" style="left:702.20px;top:461.00px;font-size:9.70px;line-height:9.70px;color:#475e6c;font-weight:700;transform:scaleX(0.8999);letter-spacing:0.6px;-webkit-text-stroke:0;">SESSIO...</span>
<span class="t" style="left:760.40px;top:461.00px;font-size:9.70px;line-height:9.70px;color:#475e6c;font-weight:700;transform:scaleX(0.9696);letter-spacing:0.6px;-webkit-text-stroke:0;">THREATS</span>
<span class="t" style="left:818.20px;top:461.00px;font-size:9.70px;line-height:9.70px;color:#475e6c;font-weight:700;transform:scaleX(0.9584);letter-spacing:0.6px;-webkit-text-stroke:0;">CONTE...</span>
<span class="t" style="left:888.20px;top:461.00px;font-size:9.70px;line-height:9.70px;color:#475e6c;font-weight:700;transform:scaleX(0.8898);letter-spacing:0.6px;-webkit-text-stroke:0;">URLS</span>
<span class="t" style="left:945.80px;top:461.00px;font-size:9.70px;line-height:9.70px;color:#475e6c;font-weight:700;transform:scaleX(0.9182);letter-spacing:0.6px;-webkit-text-stroke:0;">APPS</span>
<span class="t" style="left:993.00px;top:461.00px;font-size:9.70px;line-height:9.70px;color:#475e6c;font-weight:700;transform:scaleX(0.9362);letter-spacing:0.6px;-webkit-text-stroke:0;">SOURC...</span>
<div class="r" style="left:454.40px;top:477.60px;width:592.00px;height:1.60px;background:#d3d6d9;"></div>
<span class="t" style="left:460.20px;top:484.00px;font-size:11.30px;line-height:11.30px;color:#2b8ac1;font-weight:400;transform:scaleX(0.9750);">None</span>
<span class="t" style="left:567.20px;top:484.00px;font-size:11.30px;line-height:11.30px;color:#2b8ac1;font-weight:400;transform:scaleX(0.9750);">None</span>
<span class="t" style="left:646.54px;top:484.00px;font-size:11.10px;line-height:11.10px;color:#1c1e20;font-weight:400;transform:scaleX(0.9850);">441.2G</span>
<div class="r" style="left:685.50px;top:483.30px;width:6.40px;height:10.00px;background:#7a8590;"></div>
<span class="t" style="left:708.81px;top:484.00px;font-size:11.10px;line-height:11.10px;color:#1c1e20;font-weight:400;transform:scaleX(0.9850);">89.3k</span>
<div class="r" style="left:739.70px;top:483.30px;width:3.00px;height:10.00px;background:#7a8590;"></div>
<span class="t" style="left:760.87px;top:484.00px;font-size:11.10px;line-height:11.10px;color:#1c1e20;font-weight:400;transform:scaleX(0.9850);">722</span>
<div class="r" style="left:782.40px;top:483.30px;width:23.30px;height:10.00px;background:#7a8590;"></div>
<span class="t" style="left:824.71px;top:484.00px;font-size:11.10px;line-height:11.10px;color:#1c1e20;font-weight:400;transform:scaleX(0.9850);">5.7k</span>
<div class="r" style="left:849.80px;top:483.30px;width:6.50px;height:10.00px;background:#7a8590;"></div>
<span class="t" style="left:877.01px;top:484.00px;font-size:11.10px;line-height:11.10px;color:#1c1e20;font-weight:400;transform:scaleX(0.9850);">10.1k</span>
<div class="r" style="left:907.40px;top:483.30px;width:3.60px;height:10.00px;background:#7a8590;"></div>
<span class="t" style="left:935.77px;top:484.00px;font-size:11.10px;line-height:11.10px;color:#1c1e20;font-weight:400;transform:scaleX(0.9850);">215</span>
<div class="r" style="left:957.00px;top:483.30px;width:25.70px;height:10.00px;background:#7a8590;"></div>
<span class="t" style="left:1012.93px;top:484.00px;font-size:11.10px;line-height:11.10px;color:#1c1e20;font-weight:400;transform:scaleX(0.9850);">0</span>
<span class="t" style="left:460.20px;top:504.00px;font-size:11.30px;line-height:11.30px;color:#2b8ac1;font-weight:400;transform:scaleX(0.9750);">marsha.wirth</span>
<span class="t" style="left:567.20px;top:504.00px;font-size:11.30px;line-height:11.30px;color:#2b8ac1;font-weight:400;transform:scaleX(0.9750);">None</span>
<span class="t" style="left:658.70px;top:504.00px;font-size:11.10px;line-height:11.10px;color:#1c1e20;font-weight:400;transform:scaleX(0.9850);">1.4G</span>
<div class="r" style="left:685.50px;top:503.40px;width:1.30px;height:9.90px;background:#6a747d;"></div>
<span class="t" style="left:714.91px;top:504.00px;font-size:11.10px;line-height:11.10px;color:#1c1e20;font-weight:400;transform:scaleX(0.9850);">1.4k</span>
<div class="r" style="left:739.70px;top:503.40px;width:1.30px;height:9.90px;background:#6a747d;"></div>
<span class="t" style="left:760.87px;top:504.00px;font-size:11.10px;line-height:11.10px;color:#1c1e20;font-weight:400;transform:scaleX(0.9850);">762</span>
<div class="r" style="left:782.40px;top:503.30px;width:25.00px;height:10.00px;background:#7a8590;"></div>
<span class="t" style="left:827.17px;top:504.00px;font-size:11.10px;line-height:11.10px;color:#1c1e20;font-weight:400;transform:scaleX(0.9850);">952</span>
<div class="r" style="left:849.80px;top:503.40px;width:1.30px;height:9.90px;background:#6a747d;"></div>
<span class="t" style="left:883.11px;top:504.00px;font-size:11.10px;line-height:11.10px;color:#1c1e20;font-weight:400;transform:scaleX(0.9850);">1.1k</span>
<div class="r" style="left:907.40px;top:503.40px;width:1.30px;height:9.90px;background:#6a747d;"></div>
<span class="t" style="left:941.84px;top:504.00px;font-size:11.10px;line-height:11.10px;color:#1c1e20;font-weight:400;transform:scaleX(0.9850);">14</span>
<div class="r" style="left:957.00px;top:503.40px;width:1.30px;height:9.90px;background:#6a747d;"></div>
<span class="t" style="left:1012.93px;top:504.00px;font-size:11.10px;line-height:11.10px;color:#1c1e20;font-weight:400;transform:scaleX(0.9850);">0</span>
<span class="t" style="left:460.20px;top:524.00px;font-size:11.30px;line-height:11.30px;color:#2b8ac1;font-weight:400;transform:scaleX(0.9750);">lucas.johnston</span>
<span class="t" style="left:567.20px;top:524.00px;font-size:11.30px;line-height:11.30px;color:#2b8ac1;font-weight:400;transform:scaleX(0.9750);">None</span>
<span class="t" style="left:645.94px;top:524.00px;font-size:11.10px;line-height:11.10px;color:#1c1e20;font-weight:400;transform:scaleX(0.9850);">658.8M</span>
<div class="r" style="left:685.50px;top:523.40px;width:1.30px;height:9.90px;background:#6a747d;"></div>
<span class="t" style="left:717.37px;top:524.00px;font-size:11.10px;line-height:11.10px;color:#1c1e20;font-weight:400;transform:scaleX(0.9850);">742</span>
<div class="r" style="left:739.70px;top:523.40px;width:1.30px;height:9.90px;background:#6a747d;"></div>
<span class="t" style="left:773.03px;top:524.00px;font-size:11.10px;line-height:11.10px;color:#1c1e20;font-weight:400;transform:scaleX(0.9850);">0</span>
<span class="t" style="left:839.33px;top:524.00px;font-size:11.10px;line-height:11.10px;color:#1c1e20;font-weight:400;transform:scaleX(0.9850);">0</span>
<span class="t" style="left:897.73px;top:524.00px;font-size:11.10px;line-height:11.10px;color:#1c1e20;font-weight:400;transform:scaleX(0.9850);">4</span>
<div class="r" style="left:907.40px;top:523.40px;width:1.30px;height:9.90px;background:#6a747d;"></div>
<span class="t" style="left:947.93px;top:524.00px;font-size:11.10px;line-height:11.10px;color:#1c1e20;font-weight:400;transform:scaleX(0.9850);">4</span>
<div class="r" style="left:957.00px;top:523.40px;width:1.30px;height:9.90px;background:#6a747d;"></div>
<span class="t" style="left:1012.93px;top:524.00px;font-size:11.10px;line-height:11.10px;color:#1c1e20;font-weight:400;transform:scaleX(0.9850);">0</span>
<span class="t" style="left:460.20px;top:544.00px;font-size:11.30px;line-height:11.30px;color:#2b8ac1;font-weight:400;transform:scaleX(0.9750);">clarence.hujer</span>
<span class="t" style="left:567.20px;top:544.00px;font-size:11.30px;line-height:11.30px;color:#2b8ac1;font-weight:400;transform:scaleX(0.9750);">None</span>
<span class="t" style="left:645.94px;top:544.00px;font-size:11.10px;line-height:11.10px;color:#1c1e20;font-weight:400;transform:scaleX(0.9850);">376.6M</span>
<div class="r" style="left:685.50px;top:543.40px;width:1.30px;height:9.90px;background:#6a747d;"></div>
<span class="t" style="left:723.44px;top:544.00px;font-size:11.10px;line-height:11.10px;color:#1c1e20;font-weight:400;transform:scaleX(0.9850);">90</span>
<div class="r" style="left:739.70px;top:543.40px;width:1.30px;height:9.90px;background:#6a747d;"></div>
<span class="t" style="left:773.03px;top:544.00px;font-size:11.10px;line-height:11.10px;color:#1c1e20;font-weight:400;transform:scaleX(0.9850);">0</span>
<span class="t" style="left:839.33px;top:544.00px;font-size:11.10px;line-height:11.10px;color:#1c1e20;font-weight:400;transform:scaleX(0.9850);">6</span>
<div class="r" style="left:849.80px;top:543.40px;width:1.30px;height:9.90px;background:#6a747d;"></div>
<span class="t" style="left:891.64px;top:544.00px;font-size:11.10px;line-height:11.10px;color:#1c1e20;font-weight:400;transform:scaleX(0.9850);">14</span>
<div class="r" style="left:907.40px;top:543.40px;width:1.30px;height:9.90px;background:#6a747d;"></div>
<span class="t" style="left:947.93px;top:544.00px;font-size:11.10px;line-height:11.10px;color:#1c1e20;font-weight:400;transform:scaleX(0.9850);">6</span>
<div class="r" style="left:957.00px;top:543.40px;width:1.30px;height:9.90px;background:#6a747d;"></div>
<span class="t" style="left:1012.93px;top:544.00px;font-size:11.10px;line-height:11.10px;color:#1c1e20;font-weight:400;transform:scaleX(0.9850);">0</span>
<span class="t" style="left:460.20px;top:564.00px;font-size:11.30px;line-height:11.30px;color:#2b8ac1;font-weight:400;transform:scaleX(0.9750);">None</span>
<span class="t" style="left:567.20px;top:564.00px;font-size:11.30px;line-height:11.30px;color:#2b8ac1;font-weight:400;transform:scaleX(0.9750);">david.poster</span>
<span class="t" style="left:645.94px;top:564.00px;font-size:11.10px;line-height:11.10px;color:#1c1e20;font-weight:400;transform:scaleX(0.9850);">259.6M</span>
<div class="r" style="left:685.50px;top:563.40px;width:1.30px;height:9.90px;background:#6a747d;"></div>
<span class="t" style="left:714.91px;top:564.00px;font-size:11.10px;line-height:11.10px;color:#1c1e20;font-weight:400;transform:scaleX(0.9850);">7.3k</span>
<div class="r" style="left:739.70px;top:563.40px;width:1.30px;height:9.90px;background:#6a747d;"></div>
<span class="t" style="left:773.03px;top:564.00px;font-size:11.10px;line-height:11.10px;color:#1c1e20;font-weight:400;transform:scaleX(0.9850);">0</span>
<span class="t" style="left:824.71px;top:564.00px;font-size:11.10px;line-height:11.10px;color:#1c1e20;font-weight:400;transform:scaleX(0.9850);">2.3k</span>
<div class="r" style="left:849.80px;top:563.30px;width:3.00px;height:10.00px;background:#7a8590;"></div>
<span class="t" style="left:885.57px;top:564.00px;font-size:11.10px;line-height:11.10px;color:#1c1e20;font-weight:400;transform:scaleX(0.9850);">802</span>
<div class="r" style="left:907.40px;top:563.40px;width:1.30px;height:9.90px;background:#6a747d;"></div>
<span class="t" style="left:947.93px;top:564.00px;font-size:11.10px;line-height:11.10px;color:#1c1e20;font-weight:400;transform:scaleX(0.9850);">6</span>
<div class="r" style="left:957.00px;top:563.40px;width:1.30px;height:9.90px;background:#6a747d;"></div>
<span class="t" style="left:1012.93px;top:564.00px;font-size:11.10px;line-height:11.10px;color:#1c1e20;font-weight:400;transform:scaleX(0.9850);">0</span>
<span class="t" style="left:460.20px;top:584.00px;font-size:11.30px;line-height:11.30px;color:#2b8ac1;font-weight:400;transform:scaleX(0.9750);">steven.sharma</span>
<span class="t" style="left:567.20px;top:584.00px;font-size:11.30px;line-height:11.30px;color:#2b8ac1;font-weight:400;transform:scaleX(0.9750);">None</span>
<span class="t" style="left:645.94px;top:584.00px;font-size:11.10px;line-height:11.10px;color:#1c1e20;font-weight:400;transform:scaleX(0.9850);">234.1M</span>
<div class="r" style="left:685.50px;top:583.40px;width:1.30px;height:9.90px;background:#6a747d;"></div>
<span class="t" style="left:717.37px;top:584.00px;font-size:11.10px;line-height:11.10px;color:#1c1e20;font-weight:400;transform:scaleX(0.9850);">444</span>
<div class="r" style="left:739.70px;top:583.40px;width:1.30px;height:9.90px;background:#6a747d;"></div>
<span class="t" style="left:773.03px;top:584.00px;font-size:11.10px;line-height:11.10px;color:#1c1e20;font-weight:400;transform:scaleX(0.9850);">0</span>
<span class="t" style="left:839.33px;top:584.00px;font-size:11.10px;line-height:11.10px;color:#1c1e20;font-weight:400;transform:scaleX(0.9850);">4</span>
<div class="r" style="left:849.80px;top:583.40px;width:1.30px;height:9.90px;background:#6a747d;"></div>
<span class="t" style="left:885.57px;top:584.00px;font-size:11.10px;line-height:11.10px;color:#1c1e20;font-weight:400;transform:scaleX(0.9850);">236</span>
<div class="r" style="left:907.40px;top:583.40px;width:1.30px;height:9.90px;background:#6a747d;"></div>
<span class="t" style="left:947.93px;top:584.00px;font-size:11.10px;line-height:11.10px;color:#1c1e20;font-weight:400;transform:scaleX(0.9850);">9</span>
<div class="r" style="left:957.00px;top:583.40px;width:1.30px;height:9.90px;background:#6a747d;"></div>
<span class="t" style="left:1012.93px;top:584.00px;font-size:11.10px;line-height:11.10px;color:#1c1e20;font-weight:400;transform:scaleX(0.9850);">0</span>
<div class="r" style="left:454.40px;top:498.50px;width:591.80px;height:1.00px;background:#e9eaeb;"></div>
<div class="r" style="left:454.40px;top:518.50px;width:591.80px;height:1.00px;background:#e9eaeb;"></div>
<div class="r" style="left:454.40px;top:538.50px;width:591.80px;height:1.00px;background:#e9eaeb;"></div>
<div class="r" style="left:454.40px;top:558.50px;width:591.80px;height:1.00px;background:#e9eaeb;"></div>
<div class="r" style="left:454.40px;top:578.50px;width:591.80px;height:1.00px;background:#e9eaeb;"></div>
<div class="r" style="left:454.40px;top:598.50px;width:591.80px;height:1.00px;background:#e9eaeb;"></div>
</body></html>
